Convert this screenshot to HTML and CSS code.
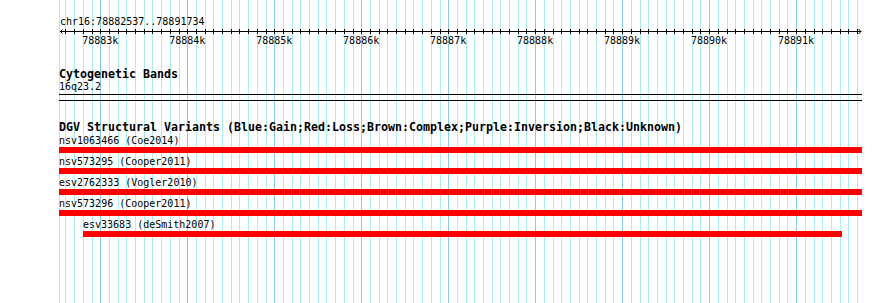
FILE: index.html
```html
<!DOCTYPE html>
<html lang="en">
<head>
  <meta charset="UTF-8">
  <title>chr16:78882537..78891734</title>
  <link rel="stylesheet" href="styles.css">
</head>
<body>

  <div class="browser">
    <!-- grid lines, one every 100 bp -->
    <svg class="grid" width="890" height="303" viewBox="0 0 890 303">
      <path class="grid-minor" d="M59.5 0V303M65.5 0V303M74.5 0V303M83.5 0V303M92.5 0V303M109.5 0V303M118.5 0V303M126.5 0V303M135.5 0V303M144.5 0V303M152.5 0V303M161.5 0V303M170.5 0V303M179.5 0V303M196.5 0V303M205.5 0V303M213.5 0V303M222.5 0V303M231.5 0V303M239.5 0V303M248.5 0V303M257.5 0V303M266.5 0V303M283.5 0V303M292.5 0V303M300.5 0V303M309.5 0V303M318.5 0V303M326.5 0V303M335.5 0V303M344.5 0V303M353.5 0V303M370.5 0V303M379.5 0V303M387.5 0V303M396.5 0V303M405.5 0V303M413.5 0V303M422.5 0V303M431.5 0V303M440.5 0V303M457.5 0V303M466.5 0V303M474.5 0V303M483.5 0V303M492.5 0V303M500.5 0V303M509.5 0V303M518.5 0V303M526.5 0V303M544.5 0V303M553.5 0V303M561.5 0V303M570.5 0V303M579.5 0V303M587.5 0V303M596.5 0V303M605.5 0V303M613.5 0V303M631.5 0V303M640.5 0V303M648.5 0V303M657.5 0V303M666.5 0V303M674.5 0V303M683.5 0V303M692.5 0V303M700.5 0V303M718.5 0V303M727.5 0V303M735.5 0V303M744.5 0V303M753.5 0V303M761.5 0V303M770.5 0V303M779.5 0V303M787.5 0V303M805.5 0V303M814.5 0V303M822.5 0V303M831.5 0V303M840.5 0V303M848.5 0V303M857.5 0V303"/>
      <path class="grid-major" d="M100.5 0V303M187.5 0V303M274.5 0V303M361.5 0V303M448.5 0V303M535.5 0V303M622.5 0V303M709.5 0V303M796.5 0V303"/>
    </svg>

    <div class="tracks">
      <div class="ruler-title">chr16:78882537..78891734</div>
      <svg class="ruler" width="890" height="6" viewBox="0 0 890 6">
        <path class="ruler-line" d="M60 3.5H861M62.5 1.5L60.5 3.5L62.5 5.5M858.5 1L861 3.5L858.5 6"/>
        <path class="ruler-line" d="M65.5 1V6M74.5 1V6M83.5 1V6M92.5 1V6M100.5 1V6M109.5 1V6M118.5 1V6M126.5 1V6M135.5 1V6M144.5 1V6M152.5 1V6M161.5 1V6M170.5 1V6M179.5 1V6M187.5 1V6M196.5 1V6M205.5 1V6M213.5 1V6M222.5 1V6M231.5 1V6M239.5 1V6M248.5 1V6M257.5 1V6M266.5 1V6M274.5 1V6M283.5 1V6M292.5 1V6M300.5 1V6M309.5 1V6M318.5 1V6M326.5 1V6M335.5 1V6M344.5 1V6M353.5 1V6M361.5 1V6M370.5 1V6M379.5 1V6M387.5 1V6M396.5 1V6M405.5 1V6M413.5 1V6M422.5 1V6M431.5 1V6M440.5 1V6M448.5 1V6M457.5 1V6M466.5 1V6M474.5 1V6M483.5 1V6M492.5 1V6M500.5 1V6M509.5 1V6M518.5 1V6M526.5 1V6M535.5 1V6M544.5 1V6M553.5 1V6M561.5 1V6M570.5 1V6M579.5 1V6M587.5 1V6M596.5 1V6M605.5 1V6M613.5 1V6M622.5 1V6M631.5 1V6M640.5 1V6M648.5 1V6M657.5 1V6M666.5 1V6M674.5 1V6M683.5 1V6M692.5 1V6M700.5 1V6M709.5 1V6M718.5 1V6M727.5 1V6M735.5 1V6M744.5 1V6M753.5 1V6M761.5 1V6M770.5 1V6M779.5 1V6M787.5 1V6M796.5 1V6M805.5 1V6M814.5 1V6M822.5 1V6M831.5 1V6M840.5 1V6M848.5 1V6M857.5 1V6"/>
      </svg>
      <div class="ruler-labels">
        <span>78883k</span>
        <span>78884k</span>
        <span>78885k</span>
        <span>78886k</span>
        <span>78887k</span>
        <span>78888k</span>
        <span>78889k</span>
        <span>78890k</span>
        <span>78891k</span>
      </div>

      <div class="track-title">Cytogenetic Bands</div>
      <div class="band-label">16q23.2</div>
      <div class="ideogram"></div>

      <div class="track-title dgv-title">DGV Structural Variants (Blue:Gain;Red:Loss;Brown:Complex;Purple:Inversion;Black:Unknown)</div>
      <div class="features">
        <div class="feature">
          <div class="feature-label">nsv1063466 (Coe2014)</div>
          <div class="bar"></div>
        </div>
        <div class="feature">
          <div class="feature-label">nsv573295 (Cooper2011)</div>
          <div class="bar"></div>
        </div>
        <div class="feature">
          <div class="feature-label">esv2762333 (Vogler2010)</div>
          <div class="bar"></div>
        </div>
        <div class="feature">
          <div class="feature-label">nsv573296 (Cooper2011)</div>
          <div class="bar"></div>
        </div>
        <div class="feature" style="margin-left: 24px; width: 759px;">
          <div class="feature-label">esv33683 (deSmith2007)</div>
          <div class="bar"></div>
        </div>
      </div>
    </div>
  </div>

</body>
</html>
```

FILE: styles.css
```css
body {
  margin: 0;
  background: #ffffff;
  font-family: "DejaVu Sans Mono", monospace;
  font-size: 10px;
  color: #000000;
}

.browser {
  position: relative;
  width: 890px;
  height: 303px;
  overflow: hidden;
  background: #ffffff;
}

.grid {
  position: absolute;
  top: 0;
  left: 0;
}

.grid-minor {
  stroke: #afeeee;
  stroke-width: 1;
  fill: none;
}

.grid-major {
  stroke: #87ceeb;
  stroke-width: 1;
  fill: none;
}

.tracks {
  position: relative;
  padding-top: 15px;
}

.ruler-title {
  line-height: 13px;
  padding-left: 60px;
  white-space: pre;
}

.ruler {
  display: block;
}

.ruler-line {
  stroke: #000000;
  stroke-width: 1;
  fill: none;
}

.ruler-labels {
  display: flex;
  margin-left: 56.78px;
  line-height: 13px;
}

.ruler-labels span {
  width: 86.98px;
  flex: none;
  text-align: center;
}

.track-title {
  margin-top: 21px;
  padding-left: 59px;
  font-weight: bold;
  font-size: 11.63px;
  line-height: 12px;
  white-space: pre;
}

.dgv-title {
  margin-top: 20px;
}

.band-label {
  padding-left: 59px;
  line-height: 13px;
}

.ideogram {
  margin: 1px 0 0 59px;
  width: 803px;
  height: 5px;
  border-top: 1px solid #000000;
  border-bottom: 1px solid #000000;
}

.features {
  margin: 1px 0 0 59px;
  width: 803px;
}

.feature {
  margin-bottom: 2px;
}

.feature-label {
  line-height: 13px;
  white-space: pre;
}

.bar {
  height: 6px;
  background: #ff0000;
}
```
